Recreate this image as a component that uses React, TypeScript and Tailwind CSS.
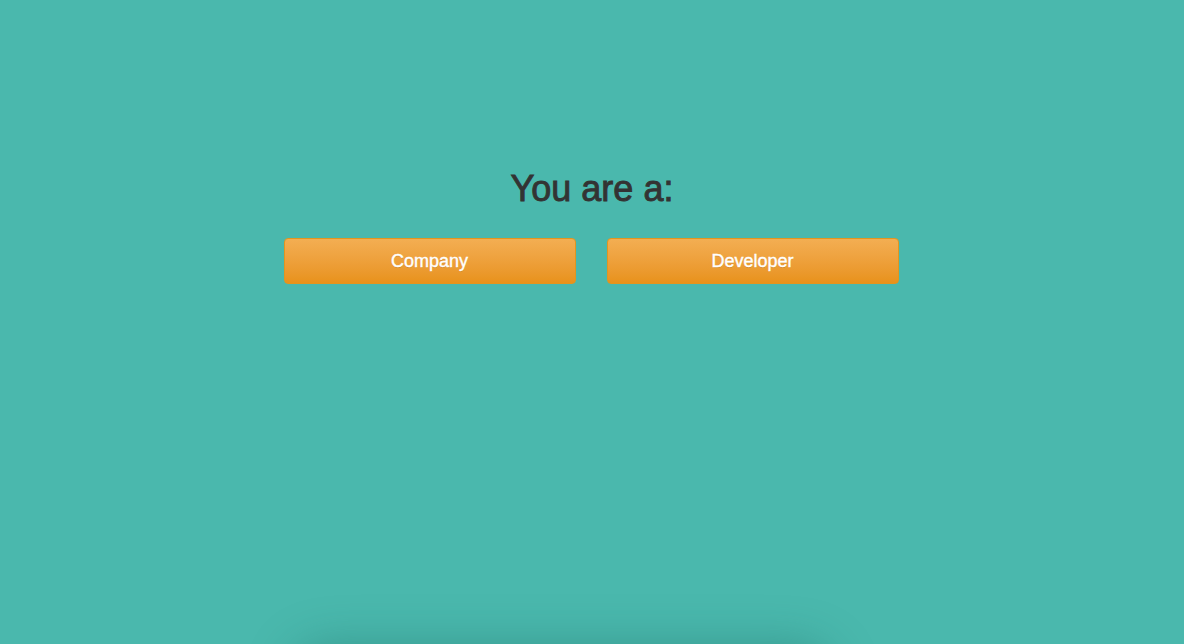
import React from "react";

const ChoiceButton = ({ label }: { label: string }) => {
  return (
    <button className="h-[46px] w-[292px] rounded-[4px] border border-[#e2951f] bg-gradient-to-b from-[#f3ae52] to-[#e8921a] text-[18px] font-normal text-white [-webkit-text-stroke:0.4px_white] [text-shadow:0_1px_0_rgba(0,0,0,0.12)]">
      {label}
    </button>
  );
};

const App = () => {
  return (
    <div className="relative h-[644px] w-full overflow-hidden bg-[#4ab8ad] font-['Liberation_Sans',Arial,sans-serif]">
      <div className="flex flex-col items-center pt-[167px]">
        <h1 className="text-[36px] font-normal leading-[44px] text-[#333333] [-webkit-text-stroke:0.9px_#333333]">
          You are a:
        </h1>
        <div className="mr-[2px] mt-[27px] flex gap-[31px]">
          <ChoiceButton label="Company" />
          <ChoiceButton label="Developer" />
        </div>
      </div>
      {/* card peeking from below the fold */}
      <div className="absolute left-[290px] top-[652px] h-[200px] w-[545px] rounded-[40px] bg-[#47ab9f] shadow-[0_-8px_45px_rgba(30,110,100,0.4)]" />
    </div>
  );
};

export default App;
